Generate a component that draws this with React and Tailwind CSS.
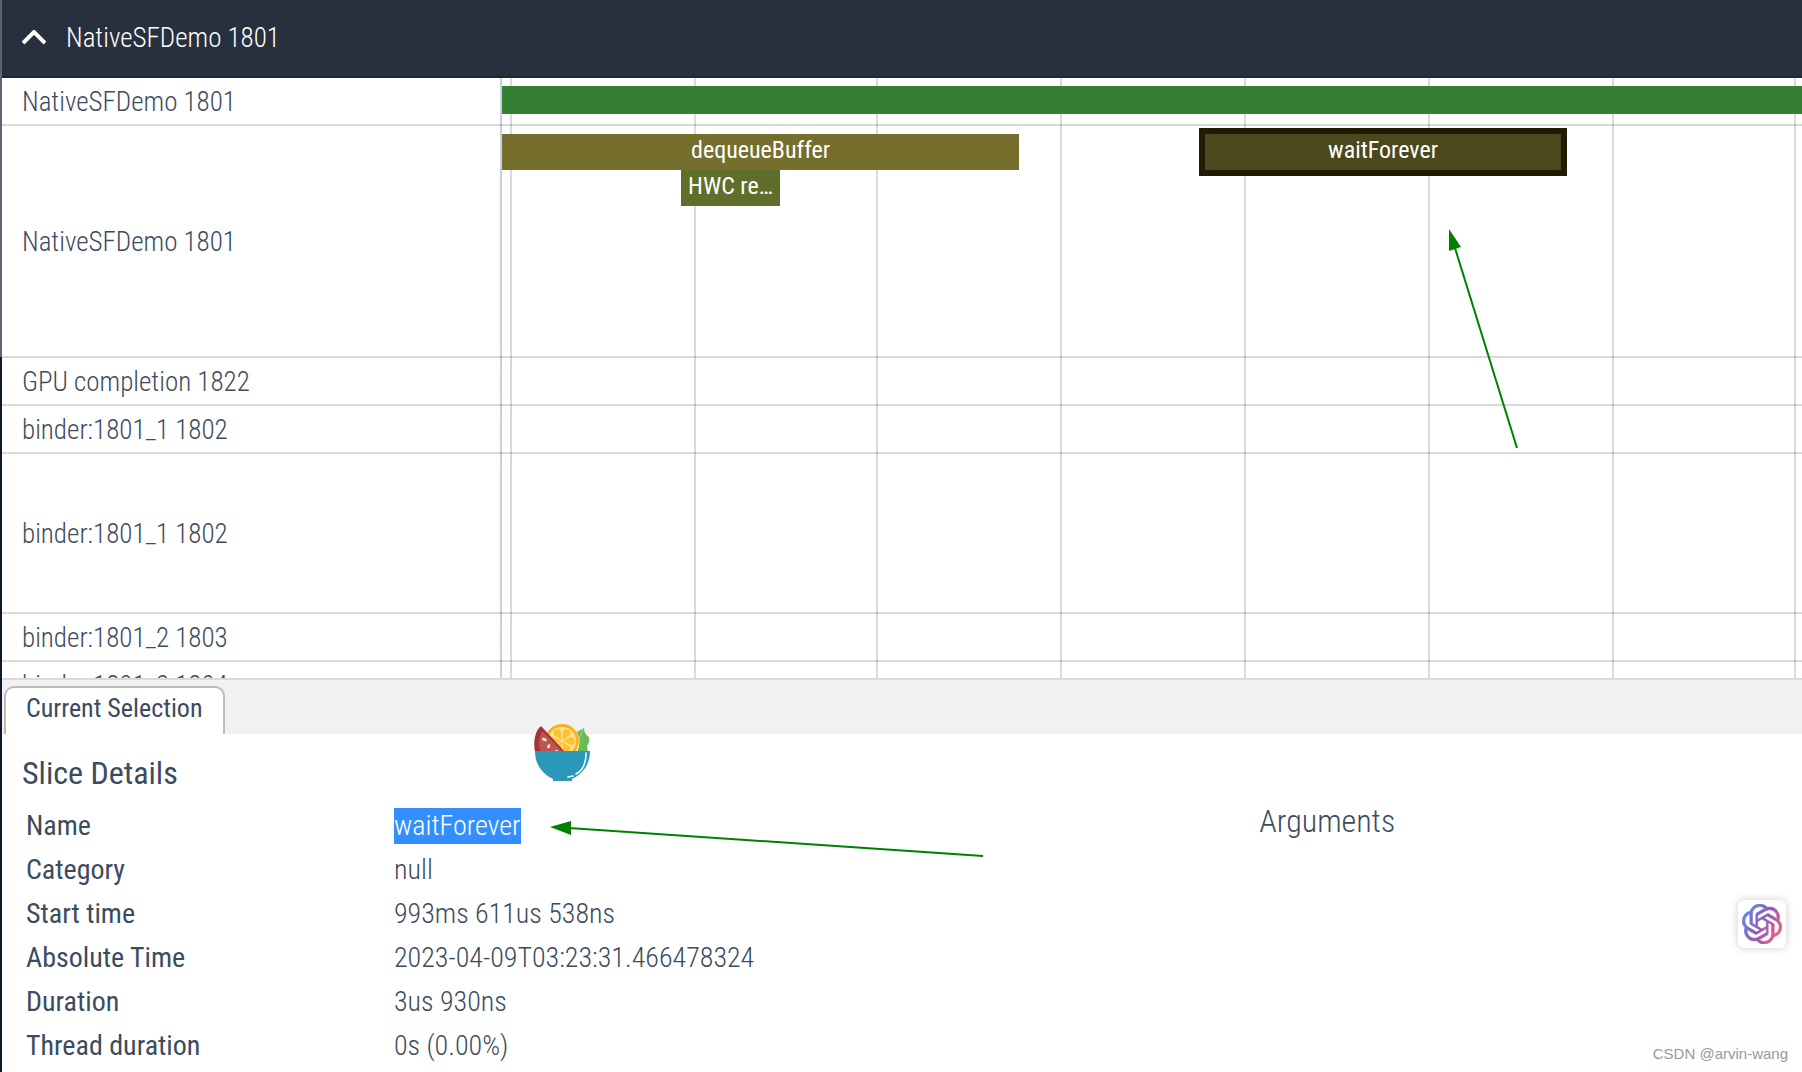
import React from 'react';

const GRID_LINES = [8, 192, 374, 558, 742, 926, 1110, 1292];
const TIMELINE_SPAN = 1300;

const TRACKS = [
  {
    name: 'NativeSFDemo 1801',
    height: 'h-12',
    slices: [{ start: 0, dur: 1300, style: 'top-2 h-7 bg-[#347f32]' }],
  },
  {
    name: 'NativeSFDemo 1801',
    height: 'h-[232px]',
    slices: [
      { title: 'dequeueBuffer', start: 0, dur: 517, style: 'top-2 h-9 bg-[#766e2d]' },
      { title: 'HWC re…', start: 179, dur: 99, style: 'top-11 h-9 bg-[#5f6f2b]' },
      { title: 'waitForever', start: 697, dur: 368, style: 'top-[2px] h-12 border-6 border-[#1f1c03] bg-[#4c481d]' },
    ],
  },
  { name: 'GPU completion 1822', height: 'h-12', slices: [] },
  { name: 'binder:1801_1 1802', height: 'h-12', slices: [] },
  { name: 'binder:1801_1 1802', height: 'h-40', slices: [] },
  { name: 'binder:1801_2 1803', height: 'h-12', slices: [] },
  { name: 'binder:1801_3 1804', height: 'h-12', slices: [] },
];

const DETAILS = [
  { label: 'Name', value: 'waitForever', selected: true },
  { label: 'Category', value: 'null' },
  { label: 'Start time', value: '993ms 611us 538ns' },
  { label: 'Absolute Time', value: '2023-04-09T03:23:31.466478324' },
  { label: 'Duration', value: '3us 930ns' },
  { label: 'Thread duration', value: '0s (0.00%)' },
];

const percent = (value) => `${(value / TIMELINE_SPAN) * 100}%`;

const Track = ({ name, height, slices }) => (
  <div className={`flex shrink-0 ${height}`}>
    <div className="flex w-[500px] shrink-0 items-center border-r-2 border-r-[#c5cfdd] pl-5 text-[27px] leading-8 font-light">
      {name}
    </div>
    <div className="relative flex-1">
      {slices.map((slice) => (
        <div
          key={slice.start}
          className={`absolute z-10 flex justify-center overflow-hidden text-2xl leading-8 whitespace-nowrap text-white ${slice.style}`}
          style={{ left: percent(slice.start), width: percent(slice.dur) }}
        >
          {slice.title}
        </div>
      ))}
    </div>
  </div>
);

const GridLines = () => (
  <div className="pointer-events-none absolute inset-y-0 right-0 left-[500px]">
    {GRID_LINES.map((x) => (
      <div key={x} className="absolute inset-y-0 w-[2px] bg-black/15" style={{ left: percent(x) }} />
    ))}
  </div>
);

const FruitBowl = () => (
  <svg className="h-[58px] w-14" viewBox="0 0 56 58">
    <circle cx="28" cy="17" r="17" fill="#fbb116" />
    <circle cx="28" cy="17" r="14" fill="#fee29a" />
    <g fill="#fdc22d">
      {[0, 60, 120, 180, 240, 300].map((angle) => (
        <path key={angle} d="M28 16 24 8q0-4 4-4t4 4Z" transform={`rotate(${angle + 30} 28 17)`} />
      ))}
    </g>
    <path d="M7 2C1 7-1 17 1 28h30Z" fill="#a53336" />
    <path d="M8 7C5 14 4 21 7 28h22Z" fill="#bd5557" />
    <g fill="#fde3c4">
      <path d="M8 14q4-1 5 3-5 1-5-3Z" />
      <path d="M13 24q0-4 3-4 1 5-3 4Z" />
      <path d="M21 26q4-1 3 2h-3Z" />
    </g>
    <path d="m43 8 7-4q0 6 5 9 1 5-2 9l1 6H43q5-10 0-20Z" fill="#6cbb57" />
    <path d="m49 5-5 13" stroke="#a5d78f" fill="none" />
    <path d="M1 27h55c0 13-7 23-18 28v2H19v-2C8 50 1 40 1 27Z" fill="#2b98b9" />
    <path d="M52 29c0 11-4 18-10 21M39 52l-5 1" stroke="#fff" strokeWidth="1.5" strokeLinecap="round" fill="none" />
  </svg>
);

const AssistantLogo = () => (
  <svg className="size-10" viewBox="0 0 24 24">
    <defs>
      <linearGradient id="knot" x1="0" y1="0.2" x2="1" y2="0.8">
        <stop offset="0%" stopColor="#5b8fe8" />
        <stop offset="50%" stopColor="#9158b5" />
        <stop offset="100%" stopColor="#f0657a" />
      </linearGradient>
    </defs>
    <path
      fill="url(#knot)"
      stroke="url(#knot)"
      strokeWidth="0.4"
      d="M22.2819 9.8211a5.9847 5.9847 0 0 0-.5157-4.9108 6.0462 6.0462 0 0 0-6.5098-2.9A6.0651 6.0651 0 0 0 4.9807 4.1818a5.9847 5.9847 0 0 0-3.9977 2.9 6.0462 6.0462 0 0 0 .7427 7.0966 5.98 5.98 0 0 0 .511 4.9107 6.051 6.051 0 0 0 6.5146 2.9001A5.9847 5.9847 0 0 0 13.2599 24a6.0557 6.0557 0 0 0 5.7718-4.2058 5.9894 5.9894 0 0 0 3.9977-2.9001 6.0557 6.0557 0 0 0-.7475-7.073zm-9.022 12.6081a4.4755 4.4755 0 0 1-2.8764-1.0408l.1419-.0804 4.7783-2.7582a.7948.7948 0 0 0 .3927-.6813v-6.7369l2.02 1.1686a.071.071 0 0 1 .038.052v5.5826a4.504 4.504 0 0 1-4.4945 4.4944zm-9.6607-4.1254a4.4708 4.4708 0 0 1-.5346-3.0137l.142.0852 4.783 2.7582a.7712.7712 0 0 0 .7806 0l5.8428-3.3685v2.3324a.0804.0804 0 0 1-.0332.0615L9.74 19.9502a4.4992 4.4992 0 0 1-6.1408-1.6464zM2.3408 7.8956a4.485 4.485 0 0 1 2.3655-1.9728V11.6a.7664.7664 0 0 0 .3879.6765l5.8144 3.3543-2.0201 1.1685a.0757.0757 0 0 1-.071 0l-4.8303-2.7865A4.504 4.504 0 0 1 2.3408 7.8956zm16.5963 3.8558L13.1038 8.364 15.1192 7.2a.0757.0757 0 0 1 .071 0l4.8303 2.7913a4.4944 4.4944 0 0 1-.6765 8.1042v-5.6772a.79.79 0 0 0-.407-.667zm2.0107-3.0231l-.142-.0852-4.7735-2.7818a.7759.7759 0 0 0-.7854 0L9.409 9.2297V6.8974a.0662.0662 0 0 1 .0284-.0615l4.8303-2.7866a4.4992 4.4992 0 0 1 6.6802 4.66zM8.3065 12.863l-2.02-1.1638a.0804.0804 0 0 1-.038-.0567V6.0742a4.4992 4.4992 0 0 1 7.3757-3.4537l-.142.0805L8.704 5.459a.7948.7948 0 0 0-.3927.6813zm1.0976-2.3654l2.602-1.4998 2.6069 1.4998v2.9994l-2.5974 1.4997-2.6067-1.4997Z"
    />
  </svg>
);

const App = () => (
  <div className="relative flex h-screen flex-col overflow-hidden bg-white pl-[2px] font-['Roboto_Condensed',Roboto,sans-serif] text-[#3c4b5d]">
    <div className="absolute inset-y-0 left-0 w-[2px] bg-[#0f1a26]">
      <div className="h-1/3 bg-[#5f6570]" />
    </div>

    {/* Process group header */}
    <header className="h-[78px] shrink-0 border-b-2 border-[#202733] bg-[#282f3d] text-white">
      <button className="flex h-full items-center gap-5 pl-5 text-[27px] leading-8 font-light">
        <svg className="h-4 w-6" viewBox="0 0 24 16" fill="none" stroke="currentColor" strokeWidth="4">
          <path d="m1 13 11-11 11 11" />
        </svg>
        NativeSFDemo 1801
      </button>
    </header>

    {/* Tracks */}
    <main className="relative flex min-h-0 flex-1 flex-col overflow-hidden">
      {TRACKS.map((track, i) => (
        <div key={i} className="relative">
          <Track {...track} />
          <div className="absolute inset-x-0 bottom-0 h-[2px] bg-black/15" />
        </div>
      ))}
      <GridLines />
      <svg className="absolute top-[150px] left-[80.4%] z-20 h-[222px] w-[72px]" viewBox="0 0 72 222">
        <path d="m6 20 62 200" stroke="#008000" strokeWidth="2" />
        <path d="m0 1 12 18-12 4Z" fill="#008000" />
      </svg>
    </main>

    {/* Details panel */}
    <section className="relative shrink-0 border-t-2 border-[#dadada] pb-1">
      <div role="tablist" className="flex h-[54px] items-end bg-[#f1f1f1] pl-[2px]">
        <button
          role="tab"
          aria-selected="true"
          className="h-12 rounded-t-[10px] border-2 border-b-0 border-[#bbb] bg-white px-5 pb-[6px] text-[26px] leading-8"
        >
          Current Selection
        </button>
      </div>

      <div className="grid grid-cols-[7fr_3fr] pr-1">
        <div className="pt-5 pl-5">
          <h2 className="text-[32px] leading-[38px]">Slice Details</h2>
          <table className="mt-3 text-[28px] leading-9">
            <tbody>
              {DETAILS.map(({ label, value, selected }) => (
                <tr key={label} className="h-11">
                  <th scope="row" className="w-[372px] pl-1 text-left font-normal">{label}</th>
                  <td className="font-light">
                    <span className={selected ? 'inline-block bg-[#338fff] text-white' : ''}>{value}</span>
                  </td>
                </tr>
              ))}
            </tbody>
          </table>
        </div>
        <h2 className="pt-[68px] text-[32px] leading-[38px] font-light">Arguments</h2>
      </div>

      <div className="absolute top-[44px] left-[532px]">
        <FruitBowl />
      </div>
      <svg className="absolute top-[140px] left-[547px] h-10 w-[436px]" viewBox="0 0 436 40">
        <path d="m20 8 414 28" stroke="#008000" strokeWidth="2" />
        <path d="m1 7 21-6v14Z" fill="#008000" />
      </svg>
      <button
        aria-label="Assistant"
        className="absolute top-[220px] right-4 flex size-12 items-center justify-center rounded-md bg-white shadow-[0_0_8px_rgba(0,0,0,0.2)]"
      >
        <AssistantLogo />
      </button>
      <p className="absolute right-[14px] bottom-2 font-['Liberation_Sans',Arial,sans-serif] text-[15px] leading-5 text-[#999]">
        CSDN @arvin-wang
      </p>
    </section>
  </div>
);

export default App;
